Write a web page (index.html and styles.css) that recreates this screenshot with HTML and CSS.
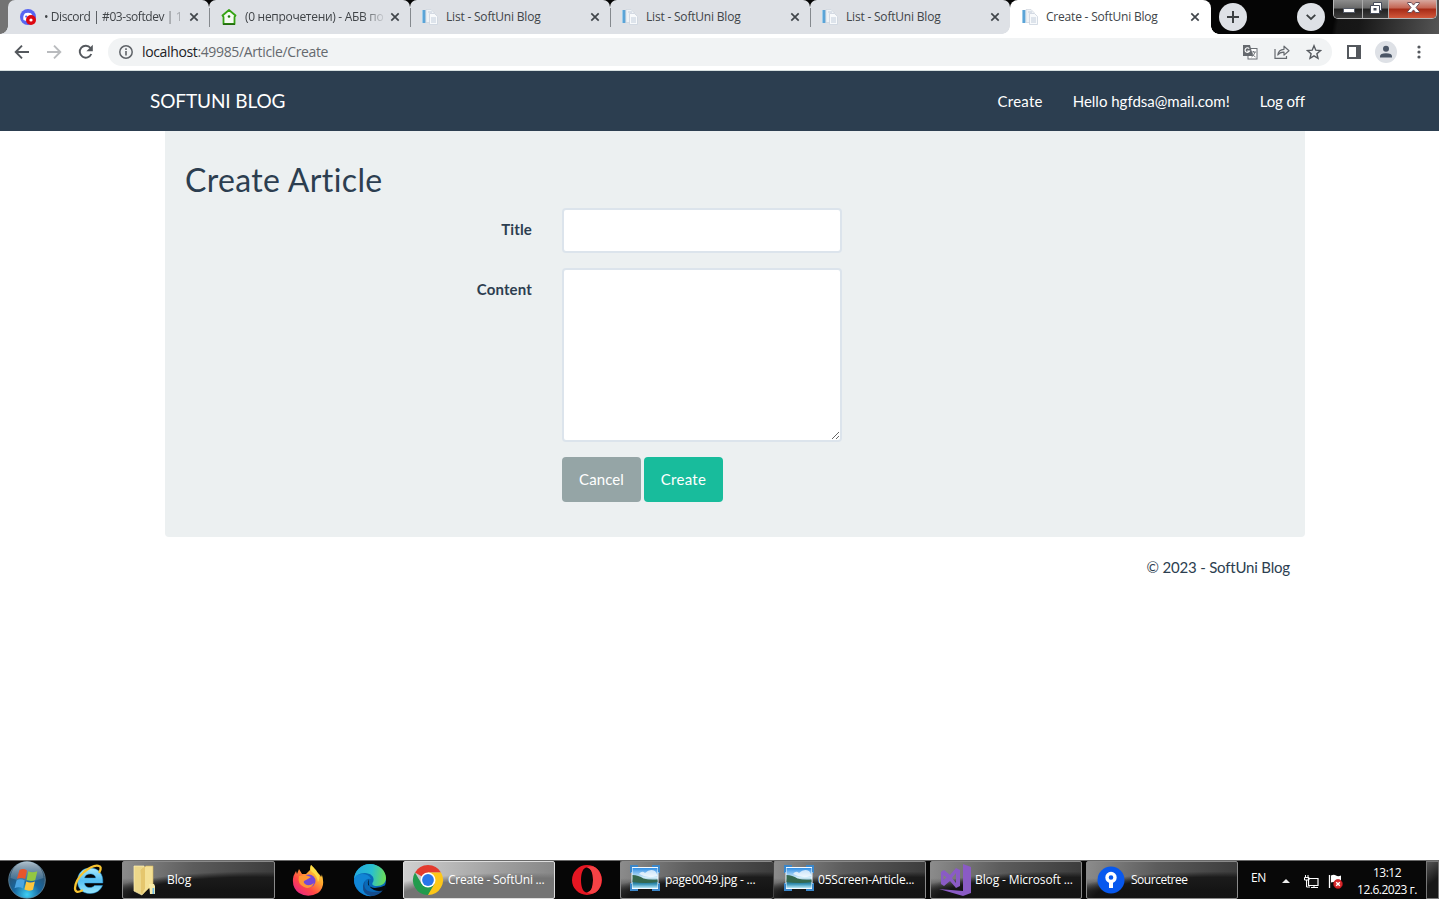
FILE: index.html
```html
<!DOCTYPE html>
<html lang="en">
<head>
<meta charset="utf-8">
<title>Create - SoftUni Blog</title>
<link rel="stylesheet" href="styles.css">
</head>
<body>
<svg class="defs" width="0" height="0">
  <defs>
    <symbol id="page" viewBox="0 0 16 16">
      <path d="M4 .5h5l3 3v10H4z" fill="#f0f3f6" stroke="#cdd4dc" stroke-width=".7"/>
      <rect x="0" y="1" width="3.400" height="13" fill="#5ba4d7"/><rect x="0" y="1" width="1" height="13" fill="#9ccbea"/>
      <path d="M7.500 4.500h5l3 3v8h-8z" fill="#f8fafc" stroke="#cbd3de" stroke-width=".8"/>
      <path d="M9 9h5M9 11h5M9 13h5M6 3h4" stroke="#bcc8d8" stroke-width=".9"/>
    </symbol>
    <symbol id="close" viewBox="0 0 10 10"><path d="M1.300 1.300l7.400 7.400M8.700 1.300L1.300 8.700" stroke="#41464b" stroke-width="1.700" fill="none"/></symbol>
    <linearGradient id="sky" x1="0" y1="0" x2="0" y2="1"><stop offset="0" stop-color="#2f8ee6"/><stop offset=".5" stop-color="#d8f1fc"/><stop offset=".68" stop-color="#246c80"/><stop offset=".8" stop-color="#338fb4"/><stop offset="1" stop-color="#b6e7f6"/></linearGradient>
    <symbol id="photo" viewBox="0 0 30 26">
      <path d="M0 0h8v4H4v4H0zM22 0h8v8h-4V4h-4zM0 18h4v4h4v4H0zM26 18h4v8h-8v-4h4z" fill="#3b86c8"/>
      <rect x="1.500" y="2" width="27" height="22" fill="#f4faff"/>
      <rect x="2.500" y="3" width="25" height="20" fill="url(#sky)"/>
      <path d="M9 9q3-4 6-1 5-5 10-2 2 2 2.500 5-9 3-18.500-2z" fill="#fff" opacity=".7"/>
      <path d="M2.500 10q6 0 11 3.500 7 2 14 1v2.500q-12 2-25 0z" fill="#35684f"/>
      <path d="M0 0h7v2H2v5H0zM23 0h7v7h-2V2h-5zM0 19h2v5h5v2H0zM28 19h2v7h-7v-2h5z" fill="#3b86c8"/>
    </symbol>
  </defs>
</svg>

<header class="tabstrip">
  <div class="tab tab-first">
    <svg class="fav" viewBox="0 0 16 16"><circle cx="8" cy="8" r="8" fill="#5865f2"/><path d="M3.500 11Q2.500 7 5 4.200q3-1 6 0Q12.500 6 12.800 8L9 12q-3 .5-5.500-1z" fill="#fff"/><circle cx="6.200" cy="7.600" r="1.100" fill="#5865f2"/><circle cx="11" cy="11" r="5" fill="#de0710"/><circle cx="11" cy="11" r="1.600" fill="#fff"/></svg>
    <span class="tab-title t-discord fade">• Discord | #03-softdev | 1</span><svg class="x"><use href="#close"/></svg>
  </div>
  <div class="tab">
    <svg class="fav" viewBox="0 0 16 16"><path d="M8 1L14.500 6.500 13.500 8v7h-11V8L1.500 6.500z" fill="#f5faf2" stroke="#35a313" stroke-width="1.800" stroke-linejoin="round"/><path d="M2 15.200h12" stroke="#246b10" stroke-width="1.600"/><circle cx="8" cy="7.500" r="1.300" fill="#227d10"/></svg>
    <span class="tab-title t-abv fade">(0 непрочетени) - АБВ по</span><svg class="x"><use href="#close"/></svg>
  </div>
  <div class="tab"><svg class="fav"><use href="#page"/></svg><span class="tab-title">List - SoftUni Blog</span><svg class="x"><use href="#close"/></svg></div>
  <div class="tab"><svg class="fav"><use href="#page"/></svg><span class="tab-title">List - SoftUni Blog</span><svg class="x"><use href="#close"/></svg></div>
  <div class="tab tab-last"><svg class="fav"><use href="#page"/></svg><span class="tab-title">List - SoftUni Blog</span><svg class="x"><use href="#close"/></svg></div>
  <div class="tab active"><svg class="fav"><use href="#page"/></svg><span class="tab-title">Create - SoftUni Blog</span><svg class="x"><use href="#close"/></svg></div>
  <div class="frame">
    <svg class="round" viewBox="0 0 28 28"><circle cx="14" cy="14" r="14" fill="#dee1e6"/><path d="M14 8v12M8 14h12" stroke="#3c4043" stroke-width="2"/></svg>
    <svg class="round" viewBox="0 0 28 28"><circle cx="14" cy="14" r="14" fill="#dee1e6"/><path d="M9.700 11.800L14 16l4.300-4.200" stroke="#3c4043" stroke-width="1.800" fill="none"/></svg>
    <div class="winbtns">
      <span class="wb"><svg width="12" height="6" viewBox="0 0 12 6"><rect x=".5" y=".5" width="11" height="4" fill="#fff" stroke="#555b68"/></svg></span>
      <span class="wb wb-max"><svg width="12" height="12" viewBox="0 0 12 12"><path d="M3.500.500h8v8h-2v3h-9v-8h3z" fill="#fff" stroke="#454b5a"/><path d="M3.500 3.500h6v5" fill="none" stroke="#454b5a"/><rect x="3.500" y="6" width="3" height="2.500" fill="#454b5a"/></svg></span>
      <span class="wb wb-close"><svg width="13" height="11" viewBox="0 0 13 11"><path d="M.7.500h3.600l2.200 2.600L8.700.500h3.600v1L9 5.500l3.300 4v1H8.700L6.500 7.900l-2.200 2.600H.7v-1L4 5.500.7 1.500z" fill="#fff" stroke="#5d4450" stroke-width=".9"/></svg></span>
    </div>
  </div>
</header>

<div class="toolbar">
  <svg class="tb" viewBox="0 0 16 16"><path d="M15 8H2M8 1.700L1.700 8 8 14.300" fill="none" stroke="#54585d" stroke-width="1.900"/></svg>
  <svg class="tb" viewBox="0 0 16 16"><path d="M1 8h13M8 1.700L14.300 8 8 14.300" fill="none" stroke="#b9bbbe" stroke-width="1.900"/></svg>
  <svg class="tb" viewBox="0 0 16 16"><path d="M13.300 10A6 6 0 1 1 12.500 4" fill="none" stroke="#54585d" stroke-width="1.900"/><path d="M14.800.8v6.400H8.400z" fill="#54585d"/></svg>
  <div class="omnibox">
    <svg class="info" viewBox="0 0 14 14"><circle cx="7" cy="7" r="6.200" fill="none" stroke="#5f6368" stroke-width="1.500"/><path d="M7 6v4.500M7 3.300v1.600" stroke="#5f6368" stroke-width="1.600"/></svg>
    <span class="url"><b>localhost</b>:49985/Article/Create</span>
    <svg class="oi" viewBox="0 0 16 16"><rect x="6" y="4.500" width="9" height="10.500" fill="#fff" stroke="#6b6f74"/><path d="M1 1h7l3 11H1z" fill="#65696e"/><path d="M7.200 4.700A2.300 2.300 0 1 0 7.500 7H5.200" fill="none" stroke="#fff" stroke-width="1.100"/><path d="M9 8h5M11.500 7v1M10 9q1 3 3.500 4M13 8q-.5 3-3.500 5" stroke="#6b6f74" fill="none" stroke-width=".9"/></svg>
    <svg class="oi" viewBox="0 0 16 16"><path d="M1 5v9.300h11.500V12" fill="none" stroke="#666a6f" stroke-width="1.200"/><path d="M3.800 11Q4.300 5.600 10 5.300V2.200L15 6.700l-5 4.400V8.200Q6 8 3.800 11z" fill="none" stroke="#666a6f" stroke-width="1.200" stroke-linejoin="round"/></svg>
    <svg class="oi" viewBox="0 0 16 16"><path d="M8 1.800l1.800 4.400 4.700.4-3.600 3.100 1.100 4.600L8 11.800l-4 2.500 1.100-4.600L1.500 6.600l4.700-.4z" fill="none" stroke="#565a5f" stroke-width="1.400"/></svg>
  </div>
  <svg class="side" viewBox="0 0 14 14"><path d="M1 1h12v12H1z" fill="#fff" stroke="#54585d" stroke-width="2"/><path d="M9 1h4v12H9z" fill="#54585d"/></svg>
  <svg class="avatar" viewBox="0 0 22 22"><circle cx="11" cy="11" r="11" fill="#dee1e6"/><circle cx="11" cy="7.800" r="3" fill="#4b5666"/><path d="M5 16.500v-1.300q0-3 6-3t6 3v1.300z" fill="#4b5666"/></svg>
  <svg class="dots" viewBox="0 0 4 14"><g fill="#54585d"><circle cx="2" cy="2" r="1.600"/><circle cx="2" cy="7" r="1.600"/><circle cx="2" cy="12" r="1.600"/></g></svg>
</div>

<div class="page">
  <nav class="navbar">
    <a class="brand">SOFTUNI BLOG</a>
    <div class="nav-right"><a class="nav-create">Create</a><a>Hello hgfdsa@mail.com!</a><a class="logoff">Log off</a></div>
  </nav>
  <main class="well">
    <h2>Create Article</h2>
    <form>
      <label for="title">Title</label><input id="title" type="text">
      <label for="content">Content</label><textarea id="content"></textarea>
      <div class="actions"><button type="button" class="btn">Cancel</button><button type="button" class="btn btn-go">Create</button></div>
    </form>
  </main>
  <footer>© 2023 - SoftUni Blog</footer>
</div>

<div class="taskbar">
  <div class="launch launch-start">
    <svg width="38" height="38" viewBox="0 0 38 38"><defs><radialGradient id="orb" cx=".5" cy=".9" r=".8"><stop offset="0" stop-color="#3fd0f5"/><stop offset=".45" stop-color="#1767a0"/><stop offset="1" stop-color="#324b60"/></radialGradient><linearGradient id="gloss" x1="0" y1="0" x2="0" y2="1"><stop offset="0" stop-color="#d8e8f2" stop-opacity=".75"/><stop offset="1" stop-color="#8fb2ca" stop-opacity=".2"/></linearGradient></defs><circle cx="19" cy="19" r="18.300" fill="url(#orb)" stroke="#668ba2" stroke-width=".8"/><path d="M2.500 17a16.500 16.500 0 0 1 33 0q-16 7-33 0z" fill="url(#gloss)"/>
    <path d="M11.500 9q4-2 7.500.5L17.200 18q-3.600-2-8.300-.2z" fill="#e8552b"/><path d="M20.300 10.200q4 2 9 .1L27.300 19q-4 1.800-8.700.1z" fill="#93c742"/><path d="M8.600 19.200q4-1.900 8.200.2L15 27.400q-4-2.200-8.500-.2z" fill="#4ba5e2"/><path d="M18.200 20.400q3.900 1.900 8.700.1L25 28.800q-4.100 2-8.600-.2z" fill="#fcc63d"/></svg>
  </div>
  <div class="launch">
    <svg width="32" height="34" viewBox="0 0 32 34"><defs><linearGradient id="ie" x1="0" y1="0" x2="0" y2="1"><stop offset="0" stop-color="#a8ebff"/><stop offset=".5" stop-color="#55bff2"/><stop offset="1" stop-color="#98e6fc"/></linearGradient></defs><path d="M17 5C9 5 4.500 11 4.500 18S9 30.500 17 30.500c6 0 10.500-3 12.500-8h-8c-2.800 3.500-10 2.500-10-2.500h18.300C30.500 11 25.500 5 17 5zM11.500 15c.7-5.500 10.800-5.500 11.300 0z" fill="url(#ie)" stroke="#2597dc" stroke-width=".5"/><path d="M26.500 9q2.800-5.500-1-6.200Q20 1.500 11 9 2.500 17 2 25q0 6 7 2.500" fill="none" stroke="#f7c431" stroke-width="2.300" stroke-linecap="round"/></svg>
  </div>
  <div class="task">
    <svg class="ticon" viewBox="0 0 32 32"><path d="M3 2h10v26l-2 3-8-4z" fill="#ecd78a" stroke="#fff0b4" stroke-width=".7"/><path d="M10 6l5-4h7v22h-4l-6 6z" fill="#f4e095" stroke="#d5b760" stroke-width=".6"/><path d="M10 6l4-3.500V25l-4 5z" fill="#e5c66d"/><path d="M18 20h5l1 2v8h-5z" fill="#f8eba9"/><rect x="21.500" y="24" width="1.700" height="6" fill="#6fbbe8"/></svg>
    <span class="s-blog">Blog</span>
  </div>
  <div class="launch">
    <svg width="32" height="32" viewBox="0 0 32 32"><defs><linearGradient id="fx" x1="1" y1="0" x2=".2" y2="1"><stop offset="0" stop-color="#fff04b"/><stop offset=".4" stop-color="#ffa530"/><stop offset=".7" stop-color="#ff4745"/><stop offset="1" stop-color="#e62487"/></linearGradient></defs><path d="M19 1q3 2 4 6 5 3 6 6 1-1 .7-3Q34 23 26 29q-10 5.500-19 0-8-6-5.500-17L4 7l1 3 2-5 3 5h4l4-4z" fill="url(#fx)"/><circle cx="17" cy="17" r="6.500" fill="#7548d8"/><path d="M7 12l6-1 6 2q-3 2-5 3-4 1-1 4 4 3 9-1-3 7-10 4Q5 20 7 12z" fill="#ff9634"/><path d="M19 1q-2 4 1 7 5 3 6 10 2-3 1-7-3-6-8-10z" fill="#ffde45"/></svg>
  </div>
  <div class="launch launch-edge">
    <svg width="34" height="34" viewBox="0 0 34 34"><defs><linearGradient id="edge" x1="0" y1=".3" x2="1" y2=".4"><stop offset="0" stop-color="#22a8df"/><stop offset=".55" stop-color="#29bfd0"/><stop offset="1" stop-color="#6bdd58"/></linearGradient></defs><circle cx="17" cy="17" r="16" fill="#0869b8"/><path d="M1 17C1 8 8 1 17 1s16 6.500 16 14c0 5-4 8-9 8-6 0-5-2.500-3.700-4.500C22 13.500 17 10 12 10 6 10 2 13 1 17z" fill="url(#edge)"/><path d="M1 17q1-6 8-6 7 0 9 5-6-1-7 5-1 8 8 12-7 1-13-5-5-5-5-11z" fill="#1186d6"/><path d="M12 18q-3 11 9 11 6 0 10-4-4 8-13 8-9-2-8-10 0-3 2-5z" fill="#134c8d"/><path d="M16 16q-4 8 6 9 5 0 11-3l1 4-3 1q-5 2-10 0-7-3-5-11z" fill="#050a0e"/></svg>
  </div>
  <div class="task current">
    <svg class="ticon" viewBox="0 0 32 32"><path d="M16 16L3 8.500A15 15 0 0 1 29 8.500H16z" fill="#e33b2e"/><path d="M3 8.500A15 15 0 0 0 16 31l6.500-11.300L16 16l-6.500 3.700z" fill="#229b4d"/><path d="M29 8.500A15 15 0 0 1 16 31l6.500-11.300L16 8.500z" fill="#fdc718"/><circle cx="16" cy="16" r="7.500" fill="#fff"/><circle cx="16" cy="16" r="5.900" fill="#2877e8"/></svg>
    <span>Create - SoftUni ...</span>
  </div>
  <div class="launch launch-opera">
    <svg width="32" height="32" viewBox="0 0 32 32"><path fill-rule="evenodd" d="M16 1a15 15 0 1 0 0 30 15 15 0 0 0 0-30zM16 3.500c4 0 6 5.500 6 12.500s-2 12.500-6 12.500S10 23 10 16 12 3.500 16 3.500z" fill="#e51622"/><path d="M16 3.500Q23 0 28 7q5 9 0 18-5 7-12 3.500 6-1 6-12.500T16 3.500z" fill="#f54245"/></svg>
  </div>
  <div class="task joined"><svg class="ticon photo"><use href="#photo"/></svg><span>page0049.jpg - ...</span></div>
  <div class="task second"><svg class="ticon photo"><use href="#photo"/></svg><span>05Screen-Article...</span></div>
  <div class="task spaced"><svg class="ticon" viewBox="0 0 32 32"><path d="M24 0l8 3v26l-8 3L0 25l24 2z" fill="#8a5bc5"/><path d="M2 8l3-2 6 5 6-7 4 2v16l-4 2-6-7-6 5-3-2zM4.500 11v5l3-2.500zM17 9l-4 5 4 5z" fill="#8a5bc5" fill-rule="evenodd"/></svg><span class="s-vs">Blog - Microsoft ...</span></div>
  <div class="task spaced"><svg class="ticon" viewBox="0 0 32 32"><circle cx="16" cy="16" r="13.500" fill="#0758ee"/><circle cx="16" cy="13.500" r="4" fill="#0758ee" stroke="#fff" stroke-width="3.400"/><path d="M14 18h4v6h-4z" fill="#fff"/></svg><span class="s-tree">Sourcetree</span></div>
  <div class="tray">
    <span class="lang">EN</span>
    <svg class="up" viewBox="0 0 8 4"><path d="M0 4l4-4 4 4z" fill="#eee"/></svg>
    <svg class="net" viewBox="0 0 15 15"><path d="M4.500 4.500h9.500v7H4.500z" fill="#111" stroke="#fff" stroke-width="1.200"/><path d="M1.500 1v3M4 1v3M.5 3.500H5V6H.5zM2.500 6v7H6M7 13.500h7M10 12v2" fill="none" stroke="#fff"/></svg>
    <svg class="flag" viewBox="0 0 15 15"><path d="M1.500 1v13" stroke="#fff" stroke-width="1.300"/><path d="M3 1.500q3-1.500 5 0t5 0v7q-2 1-5 0t-5 0z" fill="#fff"/><circle cx="10" cy="10" r="4.500" fill="#d92a2c" stroke="#a60d16" stroke-width=".6"/><path d="M8.200 8.200l3.600 3.600M11.800 8.200l-3.600 3.600" stroke="#fff" stroke-width="1.400"/></svg>
    <div class="clock"><span>13:12</span><span>12.6.2023 г.</span></div>
  </div>
  <div class="desktop"></div>
</div>
</body>
</html>
```
FILE: styles.css
```css
* { box-sizing: border-box; }
body { margin: 0; width: 1439px; height: 899px; overflow: hidden; display: flex; flex-direction: column; background: #fff; font-family: Lato, sans-serif; }
svg { display: block; flex: none; }
.defs { position: absolute; }

/* tabs */
.tabstrip { height: 34px; flex: none; display: grid; grid-template-columns: 201px 201px 200px 200px 200px 201px 1fr; padding-left: 8px; background: linear-gradient(90deg, #737373 0, #737373 20px, #050505 200px, #050505 1300px, #555 1439px); font: 12px "Open Sans", sans-serif; color: #404448; }
.tab { position: relative; display: flex; align-items: center; height: 34px; padding: 0 10px 0 12px; background: #dee1e6; border-radius: 7px 7px 0 0; }
.tab::after { content: ""; position: absolute; right: -1px; top: 8px; width: 1px; height: 19px; background: #85898e; z-index: 1; }
.tab-last::after { display: none; }
.tab-first::before, .active::before { content: ""; position: absolute; left: -8px; bottom: 0; width: 8px; height: 8px; background: radial-gradient(circle at 0 0, transparent 7.5px, #dee1e6 8px); }
.active::before { background: radial-gradient(circle at 0 0, transparent 7.5px, #fff 8px); }
.active { background: #fff; padding-right: 11px; border-radius: 8px 8px 0 0; }
.active::after { right: -8px; top: auto; bottom: 0; width: 8px; height: 8px; background: radial-gradient(circle at 100% 0, transparent 7.5px, #fff 8px); }
.fav { width: 16px; height: 16px; }
.tab-title { flex: 1; margin: 0 8px; white-space: nowrap; overflow: hidden; line-height: 20px; letter-spacing: -.2px; }
.t-discord { margin-right: 3px; letter-spacing: -.42px; }
.t-abv { margin-right: 5px; letter-spacing: -.3px; }
.fade { -webkit-mask-image: linear-gradient(90deg, #000 84%, transparent 101%); mask-image: linear-gradient(90deg, #000 84%, transparent 101%); }
.x { width: 10px; height: 10px; }
.frame { display: flex; align-items: flex-start; background: linear-gradient(100deg, #050505 0 54%, #151515 56%, #171717 65%, #555 100%); }
.round { width: 28px; height: 28px; margin: 3px 0 0 8px; }
.round + .round { margin-left: 50px; }
.winbtns { display: flex; margin-left: 8px; width: 104px; height: 19px; border: 1px solid #b8b8b8; border-top: 0; border-radius: 0 0 5px 5px; overflow: hidden; }
.wb { width: 29px; display: flex; justify-content: center; align-items: center; padding-left: 3px; background: linear-gradient(#8d8d8d, #686868 45%, #202020 50%, #404040); border-right: 1px solid #aaa; }
.wb:first-child svg { margin-top: 4px; }
.wb-max { width: 27px; padding: 0 0 3px; }
.wb-close { width: 47px; padding: 0 0 3px 1px; border: 0; background: linear-gradient(#d7a89f, #c46351 45%, #a62a16 50%, #d2583b); }

/* toolbar */
.toolbar { height: 37px; flex: none; display: flex; align-items: center; padding: 0 18px 0 14px; border-bottom: 1px solid #d6dfe0; background: #fff; }
.tb { width: 16px; height: 16px; margin-right: 16px; }
.omnibox { flex: none; width: 1224px; height: 28px; margin-left: -2px; padding: 0 10px 0 11px; display: flex; align-items: center; border-radius: 14px; background: #f1f3f4; }
.info { width: 14px; height: 14px; }
.url { flex: 1; margin-left: 9px; padding-bottom: 1px; font: 14px "Open Sans", sans-serif; letter-spacing: -.36px; color: #65696e; }
.url b { font-weight: 400; color: #202124; }
.oi { width: 16px; height: 16px; margin-left: 16px; }
.side { width: 14px; height: 14px; margin-left: 15px; }
.avatar { width: 22px; height: 22px; margin-left: 14px; }
.dots { width: 4px; height: 14px; margin-left: 20px; }

/* site */
.page { flex: 1; color: #2c3e50; font-size: 15px; line-height: 21px; }
.navbar { height: 60px; padding: 0 134px 0 150px; display: flex; align-items: center; justify-content: space-between; background: #2c3e50; color: #fff; }
.brand { padding-bottom: 2px; font-size: 19px; letter-spacing: -.11px; }
.nav-right { display: flex; gap: 30px; padding-top: 1px; }
.nav-create { letter-spacing: .25px; }
.logoff { letter-spacing: -.12px; }
.well { width: 1140px; height: 406px; margin-left: 165px; padding: 31px 20px 0; background: #ecf0f1; border-radius: 0 0 4px 4px; }
h2 { margin: 0 0 11px; font-size: 32px; line-height: 35px; font-weight: 400; letter-spacing: .37px; }
form { display: grid; grid-template-columns: 347px 280px; column-gap: 30px; row-gap: 15px; }
label { padding-top: 11px; text-align: right; font-weight: 700; letter-spacing: .15px; }
input, textarea { width: 280px; border: 2px solid #dce4ec; border-radius: 4px; background: #fff; outline: 0; }
input { height: 45px; margin: 0; }
textarea { display: block; height: 174px; margin: 0; resize: both; }
.actions { grid-column: 2; display: flex; gap: 3px; }
.btn { width: 79px; height: 45px; padding: 0 0 2px; border: 0; border-radius: 4px; background: #95a5a6; color: #fff; font: 15px Lato, sans-serif; letter-spacing: .1px; }
.btn-go { background: #18bc9c; letter-spacing: .3px; }
footer { width: 1290px; padding-top: 20px; text-align: right; letter-spacing: -.18px; }

/* taskbar */
.taskbar { height: 39px; flex: none; display: grid; grid-template-columns: 55px 67px 153px 66px 62px 152px 65px 153px 153px 156px 156px 188px 13px; background: #060606; border-top: 1px solid #696969; font: 12px "Open Sans", sans-serif; color: #fff; }
.launch { display: flex; align-items: center; justify-content: center; }
.launch-start, .launch-opera { padding-right: 2px; }
.launch-edge { padding-right: 4px; }
.task { display: flex; align-items: center; padding: 0 0 1px 8px; gap: 4px; border: 1px solid #8a8a8a; border-radius: 2px; background: linear-gradient(transparent 45%, rgba(15, 15, 15, .6) 80%), radial-gradient(ellipse 150px 26px at 85% 100%, #1b1b1b 0 80%, transparent 102%), linear-gradient(100deg, #8c8c8c, #5c5c5c 45%, #3a3a3a); white-space: nowrap; letter-spacing: -.22px; }
.current { border-color: #ddd; background: radial-gradient(ellipse 155px 25px at 80% 100%, #747474 0 80%, transparent 102%), linear-gradient(100deg, #d0d0d0, #a0a0a0 60%, #858585); }
.joined { border-right: 0; padding-right: 1px; }
.second { border-left-color: #444; padding-left: 9px; gap: 3px; }
.spaced { margin-left: 4px; }
.s-vs { letter-spacing: -.12px; }
.s-blog { letter-spacing: -.1px; }
.s-tree { letter-spacing: -.48px; }
.ticon { width: 32px; height: 32px; }
.photo { height: 26px; padding: 0 1px; margin-top: -3px; }
.tray { display: flex; align-items: center; padding-left: 13px; background: #080808; }
.lang { width: 18px; margin-top: -6px; letter-spacing: -.3px; }
.up { width: 8px; height: 4px; margin: 2px 0 0 13px; }
.net { width: 15px; height: 15px; margin: 3px 0 0 14px; }
.flag { width: 15px; height: 15px; margin: 3px 0 0 9px; }
.clock { width: 66px; margin: 1px 0 0 11px; display: flex; flex-direction: column; align-items: center; line-height: 17px; letter-spacing: -.5px; white-space: nowrap; }
.desktop { border: 1px solid #777; background: linear-gradient(140deg, #555, #181818 55%); }
```
